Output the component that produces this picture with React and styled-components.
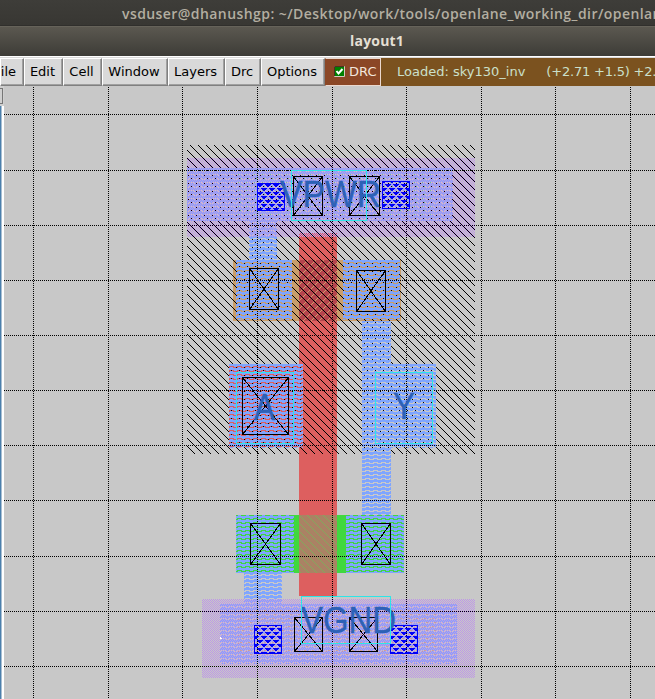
import React from 'react';
import styled, { createGlobalStyle } from 'styled-components';

const GlobalStyle = createGlobalStyle`
  * { box-sizing: border-box; }
  body { margin: 0; overflow: hidden; background: #c8c8c8; }
`;

const Desktop = styled.div`
  width: 655px;
  height: 699px;
  display: flex;
  flex-direction: column;
  overflow: hidden;
  font-family: 'DejaVu Sans', sans-serif;
`;

const TerminalTitle = styled.header`
  flex: 0 0 26px;
  min-height: 0;
  overflow: hidden;
  padding-left: 122px;
  background: linear-gradient(#3e3d39, #383733);
  border-bottom: 1px solid #302f2c;
  color: #b3aea1;
  font: 600 14px/27px 'Open Sans', sans-serif;
  letter-spacing: 0.43px;
  white-space: nowrap;
`;

const WindowTitle = styled.header`
  flex: 0 0 30px;
  padding-left: 350px;
  background: linear-gradient(#5b5850, #3d3c37);
  border-top: 1px solid #66635a;
  color: #e4dfd4;
  font: 700 14px/28px 'Open Sans', sans-serif;
  letter-spacing: 0.2px;
`;

const MenuBar = styled.nav`
  flex: 0 0 30px;
  display: flex;
  padding-top: 1px;
  background: #d9d9d9;
  border-top: 1px solid #fff;
  font-size: 13px;
  white-space: nowrap;
  overflow: hidden;
`;

const MenuButton = styled.button`
  flex: 0 0 ${(p) => p.$width}px;
  height: 28px;
  display: flex;
  align-items: center;
  justify-content: ${(p) => (p.$cut ? 'flex-end' : 'center')};
  padding: 0 ${(p) => (p.$cut ? 7 : 2)}px 2px 0;
  overflow: hidden;
  border: 1px solid;
  border-color: #fff #808080 #808080 #fff;
  box-shadow: inset -1px -1px #a0a0a0;
  background: #d9d9d9;
  color: #000;
  font: inherit;
`;

const DrcToggle = styled.label`
  flex: 0 0 56px;
  height: 28px;
  display: flex;
  align-items: center;
  gap: 4px;
  padding: 0 0 2px 8px;
  border: 1px solid #ead8cf;
  border-left-color: #8b4726;
  background: #8b4726;
  color: #f3e6dc;
`;

const Status = styled.div`
  flex: 1;
  height: 29px;
  display: flex;
  align-items: center;
  gap: 21px;
  padding: 0 0 3px 16px;
  background: #7b521f;
  color: #cbe0cb;
`;

const Coordinates = styled.span`
  letter-spacing: -0.2px;
`;

const Workspace = styled.main`
  flex: 1;
  display: flex;
  min-height: 0;
`;

const ScrollRail = styled.aside`
  flex: 0 0 4px;
  display: flex;
  flex-direction: column;
  gap: 2px;
  padding-top: 2px;
  background: #d0d0d0;
`;

const RailCap = styled.div`
  height: 16px;
  margin-right: 1px;
  border: solid #777;
  border-width: 1px 1px 1px 0;
`;

const RailTrack = styled.div`
  flex: 1;
  border-left: 1px solid #4b80ad;
  border-right: 2px solid #fff;
  background: #a9bfd2;
`;

const LayoutCanvas = styled.svg`
  display: block;
  width: 651px;
  height: 613px;
  background: #c8c8c8;
  shape-rendering: crispEdges;
`;

const NetLabel = styled.text`
  fill: #2d61b7;
  stroke: #2d61b7;
  stroke-width: 0.4px;
  font: 36px 'Liberation Sans', sans-serif;
`;

const MENUS = [
  ['File', 24], ['Edit', 39], ['Cell', 39], ['Window', 66],
  ['Layers', 57], ['Drc', 36], ['Options', 64],
];
const COLUMNS = [33, 108, 182, 257, 332, 406, 481, 555, 630];
const ROWS = [114, 170, 225, 280, 335, 390, 445, 500, 556, 611, 666];

// Every shape is [x, y, width, height] in canvas pixels.
const METAL = [
  [187, 168, 266, 53], [249, 221, 28, 39],
  [236, 260, 56, 60], [343, 260, 57, 60],
  [229, 364, 74, 84], [362, 321, 29, 43], [362, 364, 74, 84], [362, 448, 29, 67],
  [236, 515, 58, 58], [346, 515, 58, 58],
  [244, 573, 38, 31], [220, 604, 237, 60],
];
const CONTACTS = [
  [293, 176, 29, 39], [349, 176, 30, 39],
  [249, 268, 29, 41], [356, 270, 29, 41], [242, 377, 46, 57],
  [250, 523, 30, 41], [361, 523, 29, 41],
  [294, 617, 28, 34], [349, 617, 28, 34],
];
const TAPS = [[257, 183, 27, 27], [382, 181, 27, 27], [254, 625, 27, 28], [390, 625, 27, 28]];
const PORTS = [[291, 170, 75, 50], [236, 372, 57, 71], [375, 372, 57, 71], [301, 596, 89, 47]];
const LABELS = [
  ['VPWR', 280, 207, 101], ['A', 254, 420, 21], ['Y', 393, 419, 22], ['VGND', 301, 633, 95],
];

function Box({ shape: [x, y, width, height], ...rest }) {
  return <rect x={x} y={y} width={width} height={height} {...rest} />;
}

function Patterns() {
  return (
    <defs>
      <pattern id="well" x="5" width="8" height="8" patternUnits="userSpaceOnUse">
        {[0, 1, 2, 3, 4, 5, 6, 7].map((i) => <rect key={i} x={i} y={i} width="1" height="1" />)}
      </pattern>
      <pattern id="metal" x="2" width="8" height="4" patternUnits="userSpaceOnUse">
        <path fill="#7fa5ff" d="M0 0h8v2H0zM0 2h3v1H0zM4 3h3v1H4z" />
      </pattern>
      <pattern id="rail" width="2" height="2" patternUnits="userSpaceOnUse">
        <path fill="#be98e6" d="M0 0h1v1H0zM1 1h1v1H1z" />
      </pattern>
      <pattern id="gateP" width="8" height="8" patternUnits="userSpaceOnUse">
        {[0, 1, 2, 3, 4, 5, 6, 7].map((i) => (
          <rect key={i} x={7 - i} y={i} width="1" height="1" fill="#cda06b" />
        ))}
      </pattern>
      <pattern id="gateN" width="8" height="8" patternUnits="userSpaceOnUse">
        {[0, 1, 2, 3, 4, 5, 6, 7].map((i) => (
          <rect key={i} x={i} y={i} width="1" height="1" fill="#84a85c" />
        ))}
      </pattern>
      <pattern id="tap" x="1" width="8" height="8" patternUnits="userSpaceOnUse">
        <path fill="#0000f8" d="M0 0h6v1H0zM1 1h4v1H1zM2 2h2v1H2zM4 4h4v1H4zM0 4h2v1H0zM5 5h3v1H5zM0 5h1v1H0zM6 6h2v1H6z" />
      </pattern>
      <pattern id="nTap" width="8" height="8" patternUnits="userSpaceOnUse">
        <path fill="#59c266" fillOpacity=".6" d="M0 2h1v1H0zM6 6h1v1H6z" />
      </pattern>
      <pattern id="pTap" width="8" height="8" patternUnits="userSpaceOnUse">
        <path fill="#cf9e8b" fillOpacity=".8" d="M0 2h2v1H0zM6 3h1v1H6zM2 6h2v1H2z" />
      </pattern>
    </defs>
  );
}

function InverterLayout() {
  return (
    <LayoutCanvas viewBox="4 86 651 613">
      <Patterns />
      <rect x="233" y="260" width="168" height="61" fill="#c99e6b" />
      <rect x="236" y="515" width="168" height="58" fill="#40d83f" />
      <rect x="229" y="366" width="74" height="81" fill="#dd5f5f" />
      <rect x="299" y="233" width="38" height="363" fill="#dd5f5f" />
      <rect x="299" y="260" width="38" height="61" fill="#b5454d" />
      <rect x="299" y="260" width="38" height="61" fill="url(#gateP)" />
      <rect x="299" y="515" width="38" height="58" fill="#aa8264" />
      <rect x="299" y="515" width="38" height="58" fill="url(#gateN)" />
      <rect x="187" y="145" width="288" height="309" fill="url(#well)" />
      {METAL.map((shape) => <Box key={shape.join()} shape={shape} fill="url(#metal)" />)}
      <rect x="187" y="158" width="288" height="79" fill="url(#rail)" />
      <rect x="202" y="599" width="273" height="79" fill="url(#rail)" />
      <rect x="238" y="173" width="194" height="44" fill="url(#nTap)" />
      <rect x="238" y="610" width="200" height="48" fill="url(#pTap)" />
      <path d="M220 637h1v1h1v1h-2z" fill="#fff" />
      <g stroke="#000" strokeDasharray="1 1">
        {COLUMNS.map((x) => <line key={x} x1={x + 0.5} x2={x + 0.5} y1="87" y2="699" />)}
        {ROWS.map((y) => <line key={y} x1="4" x2="655" y1={y + 0.5} y2={y + 0.5} />)}
      </g>
      {CONTACTS.map(([x, y, w, h]) => (
        <path
          key={`${x}-${y}`}
          transform="translate(.5 .5)"
          d={`M${x} ${y}h${w}v${h}h${-w}zl${w} ${h}M${x + w} ${y}l${-w} ${h}`}
          fill="none"
          stroke="#000"
        />
      ))}
      {TAPS.map((shape) => (
        <g key={shape.join()}>
          <Box shape={shape} fill="url(#tap)" />
          <Box shape={shape} transform="translate(.5 .5)" fill="none" stroke="#0000f8" />
        </g>
      ))}
      {LABELS.map(([name, x, y, width]) => (
        <NetLabel key={name} x={x} y={y} textLength={width} lengthAdjust="spacingAndGlyphs">{name}</NetLabel>
      ))}
      {PORTS.map((shape) => (
        <Box key={shape.join()} shape={shape} transform="translate(.5 .5)" fill="none" stroke="#2ee5e8" />
      ))}
    </LayoutCanvas>
  );
}

function CheckMark() {
  return (
    <svg width="11" height="11" viewBox="0 0 11 11">
      <path d="M.5.5h10v10H.5z" fill="#008000" stroke="#d5c8bf" />
      <path d="M.5 10V.5H10" fill="none" stroke="#4d3020" />
      <path d="M2.5 5l2 2.5 4-4.5" fill="none" stroke="#fff" strokeWidth="2" />
    </svg>
  );
}

export default function App() {
  return (
    <Desktop>
      <GlobalStyle />
      <TerminalTitle>vsduser@dhanushgp: ~/Desktop/work/tools/openlane_working_dir/openlane</TerminalTitle>
      <WindowTitle>layout1</WindowTitle>
      <MenuBar>
        {MENUS.map(([name, width]) => (
          <MenuButton key={name} $width={width} $cut={name === 'File'}>{name}</MenuButton>
        ))}
        <DrcToggle><CheckMark />DRC</DrcToggle>
        <Status><span>Loaded: sky130_inv</span><Coordinates>(+2.71 +1.5) +2.71</Coordinates></Status>
      </MenuBar>
      <Workspace>
        <ScrollRail><RailCap /><RailTrack /></ScrollRail>
        <InverterLayout />
      </Workspace>
    </Desktop>
  );
}
